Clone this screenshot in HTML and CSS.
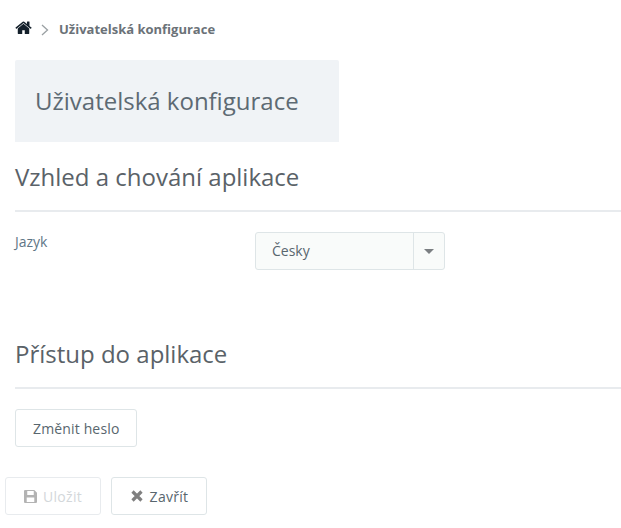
FILE: index.html
```html
<!DOCTYPE html>
<html lang="cs">
<head>
    <meta charset="UTF-8">
    <meta name="viewport" content="width=device-width, initial-scale=1.0">
    <title>Uživatelská konfigurace</title>
    <link rel="stylesheet" href="styles.css">
</head>
<body>
    <nav class="breadcrumb">
        <svg class="home-icon" viewBox="0 0 1664 1408" width="17" height="14" aria-hidden="true">
            <path d="M1408 768v480q0 26-19 45t-45 19H960V928H704v384H320q-26 0-45-19t-19-45V768q0-1 .5-3t.5-3l575-474 575 474q1 2 1 6zm223-69-62 74q-8 9-21 11h-3q-13 0-21-7L832 200 140 777q-12 8-24 7-13-2-21-11l-62-74q-8-10-7-23.500t11-21.500L756 76q32-26 76-26t76 26l272 227V86q0-14 9-23t23-9h192q14 0 23 9t9 23v408l219 182q10 8 11 21.500t-7 23.500z"/>
        </svg>
        <svg class="crumb-sep" viewBox="0 0 8 12" width="8" height="12" aria-hidden="true">
            <path d="M1 1l5.500 5L1 11" fill="none" stroke="#9aa0a3" stroke-width="1.300"/>
        </svg>
        <span class="crumb-current">Uživatelská konfigurace</span>
    </nav>

    <div class="page-title">
        <h1>Uživatelská konfigurace</h1>
    </div>

    <section class="section">
        <h2>Vzhled a chování aplikace</h2>
        <div class="form-row">
            <label class="form-label">Jazyk</label>
            <div class="select">
                <span class="select-value">Česky</span>
                <span class="select-arrow"><i class="caret"></i></span>
            </div>
        </div>
    </section>

    <section class="section section-access">
        <h2>Přístup do aplikace</h2>
        <button class="btn" type="button">Změnit heslo</button>
    </section>

    <div class="actions">
        <button class="btn btn-disabled" type="button">
            <svg viewBox="0 0 12 12" width="13" height="13" aria-hidden="true">
                <path fill="#b3b3b3" fill-rule="evenodd" d="M1 0h8.500L12 2.500V11a1 1 0 0 1-1 1H1a1 1 0 0 1-1-1V1a1 1 0 0 1 1-1zm2 1v3.500h6V1H3zm-.500 6v4h7V7h-7z"/>
            </svg>
            Uložit
        </button>
        <button class="btn" type="button">
            <svg viewBox="0 0 14 14" width="14" height="14" aria-hidden="true">
                <path d="M2.500 2.500l9 9M11.500 2.500l-9 9" stroke="#808080" stroke-width="3.200" fill="none"/>
            </svg>
            Zavřít
        </button>
    </div>
</body>
</html>
```

FILE: styles.css
```css
body {
    margin: 0;
    padding: 0 0 0 15px;
    font-family: 'Open Sans', sans-serif;
    font-size: 14px;
    color: #58666e;
    background: #fff;
    overflow: hidden;
}

/* Drobečková navigace */
.breadcrumb {
    display: flex;
    align-items: center;
    height: 20px;
    margin-top: 19px;
}

.home-icon {
    margin-right: 9px;
    fill: #14202b;
    position: relative;
    top: -1px;
}

.crumb-sep {
    margin-right: 10px;
    position: relative;
    top: 1px;
}

.crumb-current {
    font-size: 13px;
    font-weight: 700;
    color: #6b7278;
}

.page-title {
    width: 324px;
    height: 82px;
    margin-top: 21px;
    display: flex;
    align-items: center;
    padding-left: 20px;
    padding-bottom: 2px;
    box-sizing: border-box;
    background: #f0f3f6;
    border-radius: 2px 2px 0 0;
}

.page-title h1 {
    margin: 0;
    font-size: 24px;
    font-weight: 400;
    color: #5d6a73;
}

.section h2 {
    margin: 0;
    height: 68px;
    line-height: 70px;
    font-size: 24px;
    font-weight: 400;
    color: #5a6268;
    border-bottom: 2px solid #e8ebee;
}

.form-row {
    display: flex;
    height: 107px;
    padding-top: 20px;
    box-sizing: border-box;
}

.form-label {
    width: 240px;
    font-size: 14px;
    line-height: 20px;
    color: #5f7686;
}

.select {
    display: flex;
    width: 190px;
    height: 38px;
    border: 1px solid #dee5e7;
    border-radius: 3px;
    background: #f9fbfa;
    box-sizing: border-box;
    align-items: center;
}

.select-value {
    flex: 1;
    padding-left: 16px;
    position: relative;
    top: -1px;
}

.select-arrow {
    display: flex;
    align-items: center;
    justify-content: center;
    width: 30px;
    height: 100%;
    border-left: 1px solid #dee5e7;
}

.caret {
    border-top: 5px solid #7b7f82;
    border-left: 5px solid transparent;
    border-right: 5px solid transparent;
}

.section-access .btn {
    margin-top: 20px;
}

.btn {
    display: inline-flex;
    align-items: center;
    gap: 5px;
    height: 38px;
    padding: 0 17px;
    font-family: inherit;
    font-size: 14px;
    letter-spacing: 0.15px;
    color: #58666e;
    background: #fff;
    border: 1px solid #dee5e7;
    border-radius: 3px;
}

.btn-disabled {
    color: #d3d7da;
    border-color: #e8ebee;
}

.actions {
    display: flex;
    gap: 10px;
    margin: 30px 0 0 -10px;
}

.actions .btn {
    width: 96px;
    gap: 6px;
    letter-spacing: 0.3px;
    justify-content: center;
    padding: 0;
}
```
